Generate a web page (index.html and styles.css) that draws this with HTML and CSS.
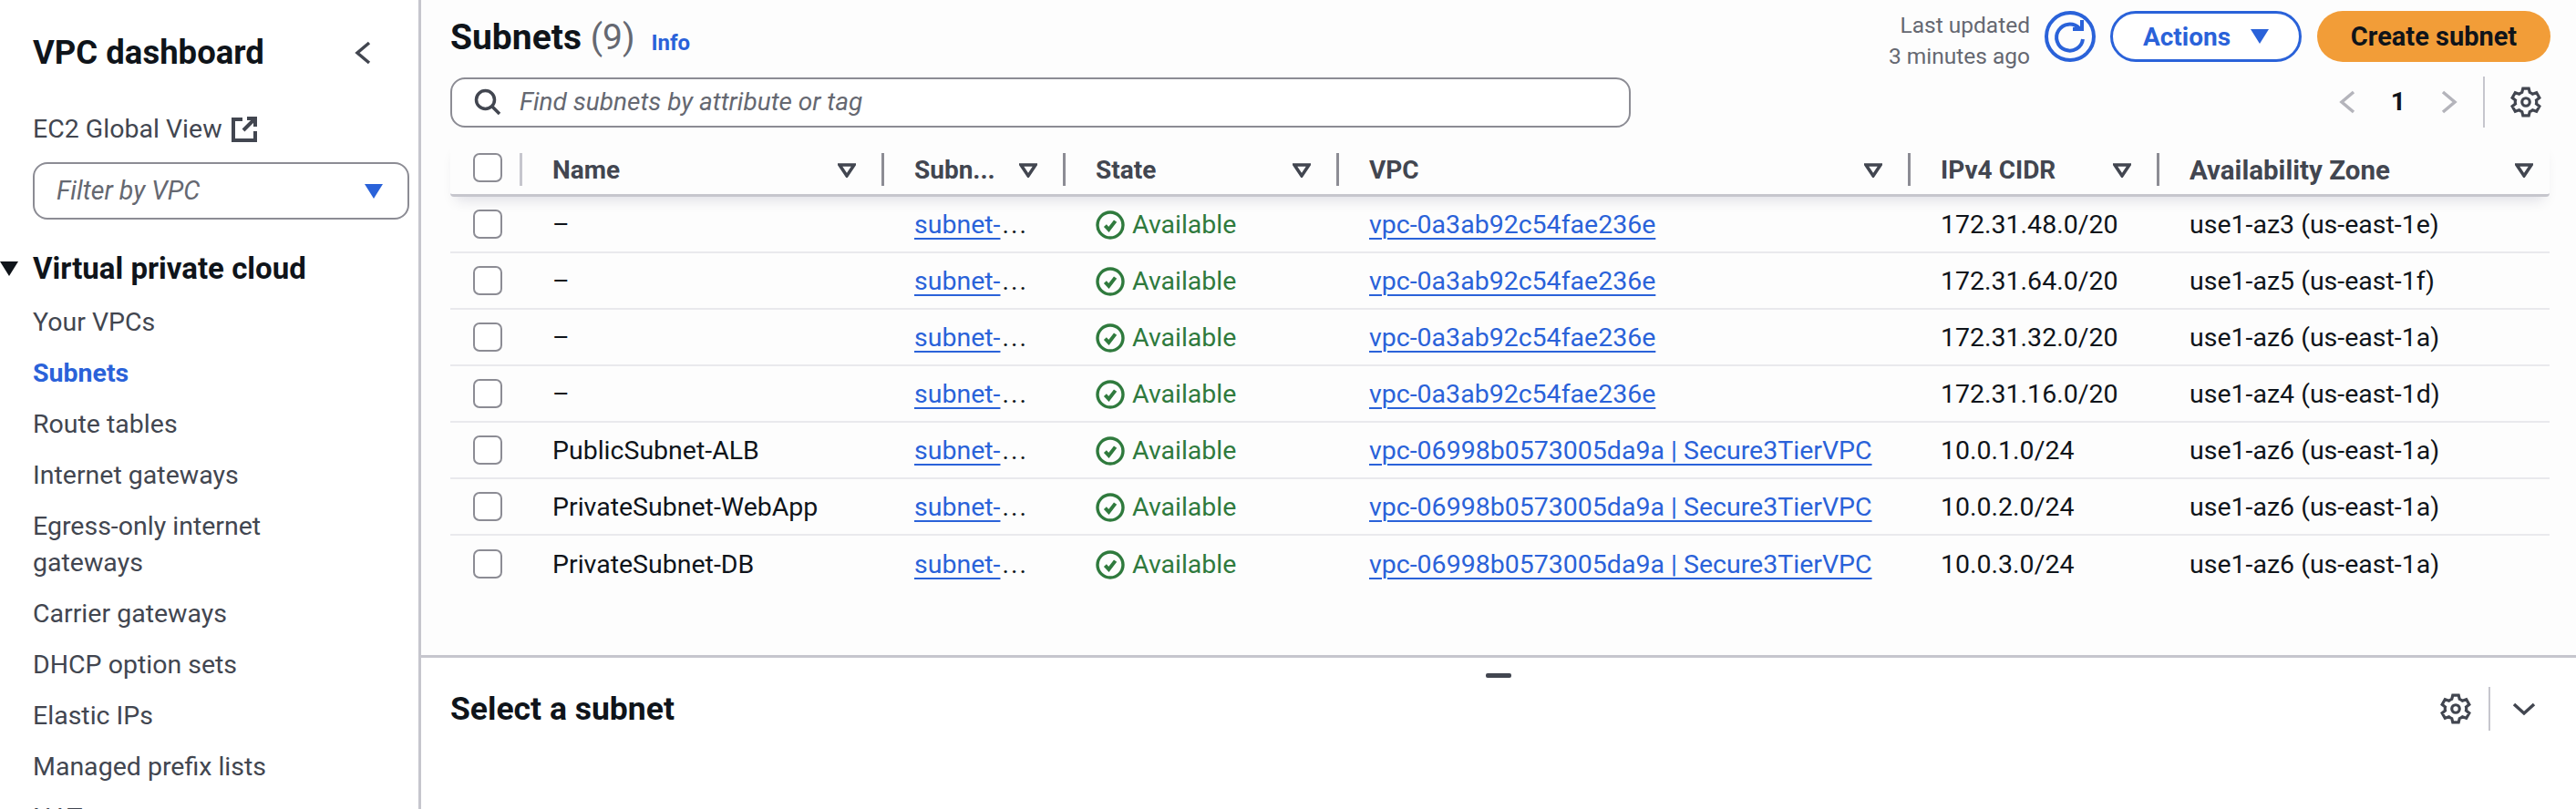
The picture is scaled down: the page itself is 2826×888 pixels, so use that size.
FILE: index.html
```html
<!DOCTYPE html>
<html lang="en">

<head>
    <meta charset="UTF-8">
    <title>Subnets | VPC Console</title>
    <link rel="stylesheet" href="styles.css">
</head>

<body>
    <svg class="icon-defs" width="0" height="0">
        <symbol id="gear" viewBox="0 0 16 16">
            <path d="M13.5 8c0-.3 0-.6-.1-.9l1.6-1.3-1.5-2.6-2 .7c-.5-.4-1-.7-1.5-.9L9.5 1h-3L6 3c-.5.2-1 .5-1.5.9l-2-.7L1 5.8l1.6 1.3c-.1.3-.1.6-.1.9s0 .6.1.9L1 10.2l1.5 2.6 2-.7c.5.4 1 .7 1.5.9l.5 2h3l.5-2c.5-.2 1-.5 1.5-.9l2 .7 1.5-2.6-1.6-1.3c.1-.3.1-.6.1-.9z" />
            <circle cx="8" cy="8" r="2" />
        </symbol>
        <symbol id="filter" viewBox="0 0 20 16">
            <path d="M2 2h16l-8 12z" />
        </symbol>
        <symbol id="ok" viewBox="0 0 16 16">
            <circle cx="8" cy="8" r="7" />
            <path class="ok-tick" d="M5.2 8.300l2 2.200 3.600-4.700" />
        </symbol>
    </svg>

    <div class="app">
        <nav class="sidebar">
            <div class="side-head">
                <span class="side-title">VPC dashboard</span>
                <svg class="side-close" viewBox="0 0 18 26"><path d="M16 2L3 13l13 11" /></svg>
            </div>
            <div class="global-link">
                EC2 Global View
                <svg class="ext-icon" viewBox="0 0 28 28"><path d="M12 3H2v23h24V16M17 2h9v9M26 2L13 15" /></svg>
            </div>
            <div class="vpc-filter">
                <span>Filter by VPC</span>
                <svg class="caret" viewBox="0 0 20 16"><path d="M0 0h20L10 16z" /></svg>
            </div>
            <div class="section-title">
                <svg class="section-caret" viewBox="0 0 20 16"><path d="M0 0h20L10 16z" /></svg>
                Virtual private cloud
            </div>
            <ul class="nav-list">
                <li>Your VPCs</li>
                <li class="active">Subnets</li>
                <li>Route tables</li>
                <li>Internet gateways</li>
                <li>Egress-only internet gateways</li>
                <li>Carrier gateways</li>
                <li>DHCP option sets</li>
                <li>Elastic IPs</li>
                <li>Managed prefix lists</li>
                <li>NAT gateways</li>
            </ul>
        </nav>

        <main class="main">
            <section class="list-pane">
                <div class="title-row">
                    <h1>Subnets <span class="count">(9)</span></h1>
                    <a class="info">Info</a>
                    <div class="updated">Last updated<br>3 minutes ago</div>
                    <button class="refresh">
                        <svg viewBox="0 0 56 56"><circle cx="28" cy="28" r="26" /><path d="M38 19a14.500 14.500 0 1 0 4 12M41 10v10H31" /></svg>
                    </button>
                    <button class="btn-outline">Actions <svg class="caret" viewBox="0 0 20 16"><path d="M0 0h20L10 16z" /></svg></button>
                    <button class="btn-primary">Create subnet</button>
                </div>

                <div class="search-row">
                    <div class="search">
                        <svg viewBox="0 0 30 30"><circle cx="12.500" cy="12.500" r="10" /><path d="M20 20l8 8" /></svg>
                        <span>Find subnets by attribute or tag</span>
                    </div>
                    <div class="pager">
                        <svg class="pager-arrow" viewBox="0 0 18 26"><path d="M16 2L3 13l13 11" /></svg>
                        <span class="page-no">1</span>
                        <svg class="pager-arrow" viewBox="0 0 18 26"><path d="M2 2l13 11L2 24" /></svg>
                    </div>
                    <div class="pager-gear">
                        <svg class="gear"><use href="#gear" /></svg>
                    </div>
                </div>

                <div class="table">
                    <div class="thead tgrid">
                        <div class="check-cell"><span class="check"></span></div>
                        <div class="th th-first">Name <svg class="filter"><use href="#filter" /></svg></div>
                        <div class="th">Subn... <svg class="filter"><use href="#filter" /></svg></div>
                        <div class="th">State <svg class="filter"><use href="#filter" /></svg></div>
                        <div class="th">VPC <svg class="filter"><use href="#filter" /></svg></div>
                        <div class="th">IPv4 CIDR <svg class="filter"><use href="#filter" /></svg></div>
                        <div class="th th-last"><span class="th-wide">Availability Zone</span> <svg class="filter"><use href="#filter" /></svg></div>
                    </div>

                    <div class="tr tgrid">
                        <div class="check-cell"><span class="check"></span></div>
                        <div class="td">–</div>
                        <div class="td"><a>subnet-</a><span class="more">...</span></div>
                        <div class="td status"><svg class="ok"><use href="#ok" /></svg>Available</div>
                        <div class="td"><a>vpc-0a3ab92c54fae236e</a></div>
                        <div class="td">172.31.48.0/20</div>
                        <div class="td">use1-az3 (us-east-1e)</div>
                    </div>
                    <div class="tr tgrid">
                        <div class="check-cell"><span class="check"></span></div>
                        <div class="td">–</div>
                        <div class="td"><a>subnet-</a><span class="more">...</span></div>
                        <div class="td status"><svg class="ok"><use href="#ok" /></svg>Available</div>
                        <div class="td"><a>vpc-0a3ab92c54fae236e</a></div>
                        <div class="td">172.31.64.0/20</div>
                        <div class="td">use1-az5 (us-east-1f)</div>
                    </div>
                    <div class="tr tgrid">
                        <div class="check-cell"><span class="check"></span></div>
                        <div class="td">–</div>
                        <div class="td"><a>subnet-</a><span class="more">...</span></div>
                        <div class="td status"><svg class="ok"><use href="#ok" /></svg>Available</div>
                        <div class="td"><a>vpc-0a3ab92c54fae236e</a></div>
                        <div class="td">172.31.32.0/20</div>
                        <div class="td">use1-az6 (us-east-1a)</div>
                    </div>
                    <div class="tr tgrid">
                        <div class="check-cell"><span class="check"></span></div>
                        <div class="td">–</div>
                        <div class="td"><a>subnet-</a><span class="more">...</span></div>
                        <div class="td status"><svg class="ok"><use href="#ok" /></svg>Available</div>
                        <div class="td"><a>vpc-0a3ab92c54fae236e</a></div>
                        <div class="td">172.31.16.0/20</div>
                        <div class="td">use1-az4 (us-east-1d)</div>
                    </div>
                    <div class="tr tgrid">
                        <div class="check-cell"><span class="check"></span></div>
                        <div class="td">PublicSubnet-ALB</div>
                        <div class="td"><a>subnet-</a><span class="more">...</span></div>
                        <div class="td status"><svg class="ok"><use href="#ok" /></svg>Available</div>
                        <div class="td"><a>vpc-06998b0573005da9a | Secure3TierVPC</a></div>
                        <div class="td">10.0.1.0/24</div>
                        <div class="td">use1-az6 (us-east-1a)</div>
                    </div>
                    <div class="tr tgrid">
                        <div class="check-cell"><span class="check"></span></div>
                        <div class="td">PrivateSubnet-WebApp</div>
                        <div class="td"><a>subnet-</a><span class="more">...</span></div>
                        <div class="td status"><svg class="ok"><use href="#ok" /></svg>Available</div>
                        <div class="td"><a>vpc-06998b0573005da9a | Secure3TierVPC</a></div>
                        <div class="td">10.0.2.0/24</div>
                        <div class="td">use1-az6 (us-east-1a)</div>
                    </div>
                    <div class="tr tgrid">
                        <div class="check-cell"><span class="check"></span></div>
                        <div class="td">PrivateSubnet-DB</div>
                        <div class="td"><a>subnet-</a><span class="more">...</span></div>
                        <div class="td status"><svg class="ok"><use href="#ok" /></svg>Available</div>
                        <div class="td"><a>vpc-06998b0573005da9a | Secure3TierVPC</a></div>
                        <div class="td">10.0.3.0/24</div>
                        <div class="td">use1-az6 (us-east-1a)</div>
                    </div>
                </div>
            </section>

            <section class="detail-pane">
                <div class="drag-row"><span class="drag-handle"></span></div>
                <div class="detail-head">
                    <h2>Select a subnet</h2>
                    <svg class="gear"><use href="#gear" /></svg>
                    <span class="detail-sep"></span>
                    <svg class="detail-chevron" viewBox="0 0 28 16"><path d="M3 3l11 10L25 3" /></svg>
                </div>
            </section>
        </main>
    </div>
</body>

</html>
```

FILE: styles.css
```css
* {
    box-sizing: border-box;
}

html,
body {
    margin: 0;
    padding: 0;
    height: 888px;
    overflow: hidden;
}

body {
    font-family: "Roboto", "Liberation Sans", sans-serif;
    font-size: 28.5px;
    line-height: 40px;
    color: #0f141a;
    background-color: #fff;
}

svg {
    display: block;
    flex: none;
    fill: none;
}

.icon-defs {
    position: absolute;
}

.app {
    display: flex;
    height: 888px;
}

/* side navigation */

.sidebar {
    flex: none;
    width: 462px;
    height: 888px;
    overflow: hidden;
    border-right: 3px solid #c6c6cd;
    padding: 38px 10px 0 36px;
    background-color: #fff;
    color: #424650;
}

.side-head {
    display: flex;
    align-items: center;
    justify-content: space-between;
    padding-right: 42px;
}

.side-title {
    font-size: 36.5px;
    font-weight: 700;
    color: #0f141a;
}

.side-close {
    width: 18px;
    height: 26px;
    stroke: #424650;
    stroke-width: 3.500;
}

.global-link {
    display: flex;
    align-items: center;
    gap: 10px;
    margin-top: 44px;
}

.ext-icon {
    width: 28px;
    height: 28px;
    stroke: #424650;
    stroke-width: 4;
}

.vpc-filter {
    display: flex;
    align-items: center;
    justify-content: space-between;
    height: 63px;
    margin-top: 16px;
    padding: 0 27px 0 24px;
    border: 2px solid #8c8c94;
    border-radius: 16px;
    font-style: italic;
    color: #656871;
}

.caret {
    width: 20px;
    height: 16px;
    fill: #2a62d9;
}

.section-title {
    display: flex;
    align-items: center;
    margin: 34px 0 0 -36px;
    font-size: 33px;
    font-weight: 700;
    color: #0f141a;
}

.section-caret {
    width: 20px;
    height: 16px;
    margin-right: 16px;
    fill: #0f141a;
}

.nav-list {
    display: flex;
    flex-direction: column;
    gap: 16px;
    width: 340px;
    margin: 19px 0 0;
    padding: 0;
    list-style: none;
}

.nav-list .active {
    font-weight: 700;
    color: #2a62d9;
}

/* main column */

.main {
    flex: 1;
    min-width: 0;
    display: flex;
    flex-direction: column;
}

.list-pane {
    height: 722px;
    padding: 12px 28px 0 32px;
    border-bottom: 3px solid #c6c6cd;
    background-color: #fdfdfd;
}

.title-row {
    display: flex;
    align-items: center;
    height: 56px;
}

h1 {
    margin: 2px 0 0;
    font-size: 39px;
    font-weight: 700;
}

.count {
    font-weight: 400;
    color: #656871;
}

.info {
    margin: 14px 0 0 18px;
    font-size: 24px;
    font-weight: 700;
    color: #2a62d9;
}

.updated {
    margin: 10px 0 0 auto;
    font-size: 24.5px;
    line-height: 34px;
    text-align: right;
    color: #656871;
}

button {
    font-family: inherit;
    font-size: 28px;
    font-weight: 700;
    height: 56px;
    cursor: pointer;
}

.refresh {
    width: 56px;
    margin: 0 16px;
    padding: 0;
    border: none;
    background: none;
}

.refresh svg {
    width: 56px;
    height: 56px;
    stroke: #2a62d9;
    stroke-width: 4;
}

.btn-outline {
    display: flex;
    align-items: center;
    justify-content: center;
    gap: 22px;
    width: 210px;
    border: 3px solid #2a62d9;
    border-radius: 28px;
    background-color: #fff;
    color: #2a62d9;
}

.btn-primary {
    width: 256px;
    margin-left: 17px;
    border: none;
    border-radius: 28px;
    background-color: #f29d38;
    font-size: 29px;
    color: #0f141a;
}

.search-row {
    display: flex;
    align-items: center;
    height: 56px;
    margin-top: 16px;
}

.search {
    display: flex;
    align-items: center;
    gap: 20px;
    width: 1295px;
    height: 55px;
    padding-left: 24px;
    border: 2px solid #8c8c94;
    border-radius: 16px;
    background-color: #fff;
    font-style: italic;
    font-size: 28px;
    color: #656871;
}

.search svg {
    width: 30px;
    height: 30px;
    stroke: #424650;
    stroke-width: 3.500;
}

.pager {
    display: flex;
    align-items: center;
    gap: 39px;
    margin-left: auto;
    padding-right: 28px;
}

.pager-arrow {
    width: 18px;
    height: 26px;
    stroke: #b4b4bb;
    stroke-width: 3.500;
}

.page-no {
    font-weight: 700;
}

.pager-gear {
    display: flex;
    align-items: center;
    height: 56px;
    padding-left: 28px;
    padding-right: 10px;
    border-left: 2px solid #c6c6cd;
}

.gear {
    width: 34px;
    height: 34px;
    stroke: #424650;
    stroke-width: 1.500;
}

/* table */

.table {
    margin-top: 15px;
}

.tgrid {
    display: grid;
    grid-template-columns: 76px 397px 199px 300px 627px 273px 431px;
    width: 2303px;
}

.thead {
    position: relative;
    z-index: 1;
    height: 61px;
    padding-top: 13px;
    border-bottom: 3px solid #c6c6cd;
    border-radius: 0 0 4px 4px;
    background-color: #fdfdfd;
    box-shadow: 0 10px 14px -6px rgba(0, 0, 60, 0.12);
}

.check-cell {
    padding-left: 25px;
}

.check {
    display: block;
    width: 32px;
    height: 32px;
    border: 2px solid #8c8c94;
    border-radius: 7px;
    background-color: #fff;
}

.th {
    display: flex;
    align-items: center;
    justify-content: space-between;
    height: 36px;
    padding: 2px 28px 0 33px;
    border-left: 3px solid #8c8c94;
    font-size: 28px;
    font-weight: 700;
    color: #424650;
}

.th-first {
    border-left-color: #c6c6cd;
}

.th-last {
    padding-right: 18px;
}

.th-wide {
    font-size: 29.5px;
}

.filter {
    width: 20px;
    height: 16px;
    stroke: #424650;
    stroke-width: 3.500;
}

.tr {
    align-items: center;
    height: 62px;
    border-bottom: 2px solid #e9e9ed;
}

.tr:last-child {
    border-bottom: none;
}

.td {
    padding-top: 2px;
    padding-left: 36px;
    white-space: nowrap;
}

.td a {
    color: #2a62d9;
    text-decoration: underline;
    text-decoration-thickness: 2px;
    text-underline-offset: 5px;
}

.more {
    margin-left: 2px;
    letter-spacing: 2px;
}

.status {
    display: flex;
    align-items: center;
    gap: 8px;
    color: #2f7a3d;
}

.ok {
    width: 32px;
    height: 32px;
    stroke: #2f7a3d;
    stroke-width: 1.700;
}

.ok-tick {
    stroke-width: 2;
}

/* split panel */

.detail-pane {
    flex: 1;
    background-color: #fff;
}

.drag-row {
    display: flex;
    justify-content: center;
    padding-top: 17px;
}

.drag-handle {
    width: 28px;
    height: 5px;
    border-radius: 2px;
    background-color: #424650;
}

.detail-head {
    display: flex;
    align-items: center;
    height: 48px;
    margin-top: 10px;
    padding: 0 43px 0 32px;
}

h2 {
    flex: 1;
    margin: 0;
    font-size: 35.5px;
    font-weight: 700;
}

.detail-sep {
    width: 2px;
    height: 48px;
    margin: 0 23px 0 19px;
    background-color: #c6c6cd;
}

.detail-chevron {
    width: 28px;
    height: 16px;
    stroke: #424650;
    stroke-width: 3.500;
}
```
